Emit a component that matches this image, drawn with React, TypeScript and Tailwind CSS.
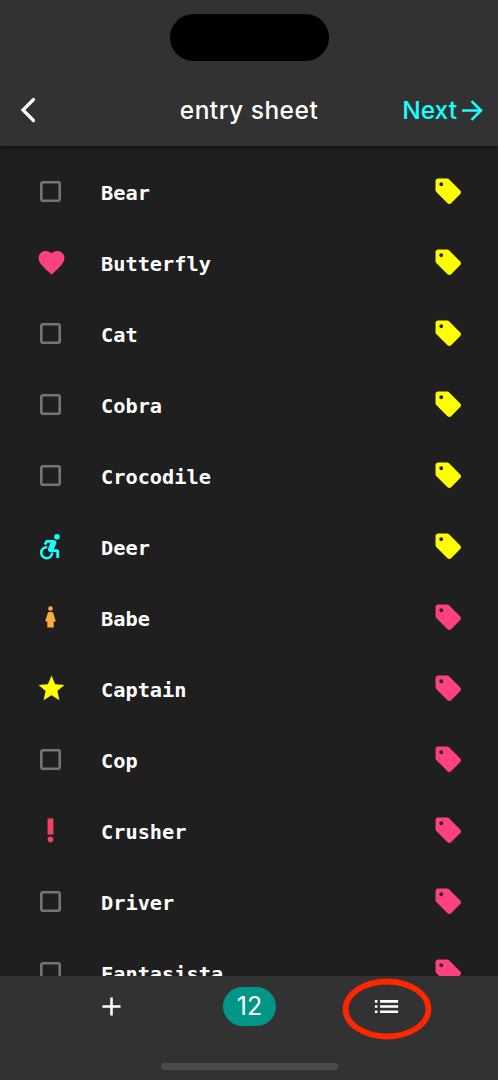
import { MdAdd, MdArrowForward, MdFavorite, MdList, MdSell, MdStar } from "react-icons/md";

type Mark = "none" | "heart" | "wheelchair" | "woman" | "star" | "alert";

type Entry = {
  name: string;
  mark: Mark;
  tag: "yellow" | "pink";
};

const entries: Entry[] = [
  { name: "Bear", mark: "none", tag: "yellow" },
  { name: "Butterfly", mark: "heart", tag: "yellow" },
  { name: "Cat", mark: "none", tag: "yellow" },
  { name: "Cobra", mark: "none", tag: "yellow" },
  { name: "Crocodile", mark: "none", tag: "yellow" },
  { name: "Deer", mark: "wheelchair", tag: "yellow" },
  { name: "Babe", mark: "woman", tag: "pink" },
  { name: "Captain", mark: "star", tag: "pink" },
  { name: "Cop", mark: "none", tag: "pink" },
  { name: "Crusher", mark: "alert", tag: "pink" },
  { name: "Driver", mark: "none", tag: "pink" },
  { name: "Fantasista", mark: "none", tag: "pink" },
];

function MarkIcon({ mark }: { mark: Mark }) {
  switch (mark) {
    case "heart":
      return <MdFavorite size={31} className="ml-px text-[#ff4081]" />;
    case "wheelchair":
      return (
        <svg width="25" height="28" viewBox="0 0 25 28" fill="none" className="mb-0.5 text-[#18ffff]">
          <circle cx="19" cy="4.7" r="2.8" fill="currentColor" />
          <path d="M6.9 12.6 L8.7 9.3 H14.5" stroke="currentColor" strokeWidth="2.7" />
          <path
            d="M12 8 H15.6 C18 8.2 19.1 9.8 18.2 11.8 L15.8 17.2 H18.6 C20.2 17.2 21.2 18 21.2 19.6 V26 H18.3 V20 H11.6 C10 19.2 9.6 18 10.1 16.6 L12.4 11 Z"
            fill="currentColor"
          />
          <path d="M9.3 15.2 A5.5 5.5 0 1 0 14.2 20.6" stroke="currentColor" strokeWidth="2.5" />
        </svg>
      );
    case "woman":
      return (
        <svg width="11" height="22" viewBox="0 0 11 22" fill="#ffab40" className="mb-px">
          <circle cx="5.5" cy="2.6" r="2.3" />
          <path d="M4.2 6 H6.8 Q7.8 6 8.2 7.1 L10.9 15.6 H8.7 V21.4 H2.3 V15.6 H0.1 L2.8 7.1 Q3.2 6 4.2 6 Z" />
        </svg>
      );
    case "star":
      return <MdStar size={31} className="ml-px text-[#ffff00]" />;
    case "alert":
      return (
        <svg width="7" height="26" viewBox="0 0 7 26" fill="#ef4264">
          <rect x="0.6" y="0.4" width="5.8" height="16.2" />
          <circle cx="3.5" cy="21.4" r="2.8" />
        </svg>
      );
    default:
      return (
        <svg width="21" height="21" viewBox="0 0 21 21" fill="none">
          <rect x="1.3" y="1.3" width="18.4" height="18.4" rx="1.6" stroke="#757575" strokeWidth="2.6" />
        </svg>
      );
  }
}

function EntryRow({ name, mark, tag }: Entry) {
  return (
    <li className="flex h-[71px] shrink-0 items-center pr-[35px] pl-[34px]">
      <span className="flex w-[33px] justify-center">
        <MarkIcon mark={mark} />
      </span>
      <span className="ml-[34px] flex-1 pt-[3px] font-['DejaVu_Sans_Mono',monospace] text-[20.3px] leading-6 font-bold text-white">
        {name}
      </span>
      <MdSell size={30.5} className={tag === "yellow" ? "text-[#ffff00]" : "text-[#ff4081]"} />
    </li>
  );
}

export default function App() {
  return (
    <div className="flex h-[1080px] w-[498px] flex-col overflow-hidden bg-[#1f1f1f] font-['Inter',sans-serif]">
      {/* App bar */}
      <header className="z-10 flex h-[146px] shrink-0 flex-col bg-[#323232] shadow-[0_2px_5px_rgba(0,0,0,0.35)]">
        <div className="mx-auto mt-3.5 h-[47px] w-[159px] rounded-full bg-black" />
        <div className="mt-[14px] grid h-[71px] grid-cols-3 items-center">
          <svg className="mb-px ml-5" width="17" height="26" viewBox="0 0 17 26" fill="none">
            <path d="M13.5 2.5 L3 13 L13.5 23.5" stroke="#fff" strokeWidth="3.2" strokeLinecap="round" />
          </svg>
          <h1 className="mb-px text-center text-[24.5px] leading-8 font-medium tracking-[0.5px] whitespace-nowrap text-white">
            entry sheet
          </h1>
          <button className="mb-px flex items-center justify-end pr-[10px] text-[24.5px] leading-8 font-medium text-[#18ffff]">
            Next
            <MdArrowForward size={31} />
          </button>
        </div>
      </header>

      {/* Entries */}
      <ul className="flex min-h-0 flex-1 flex-col overflow-hidden pt-[10px]">
        {entries.map((entry) => (
          <EntryRow key={entry.name} {...entry} />
        ))}
      </ul>

      {/* Bottom bar */}
      <footer className="flex h-[104px] shrink-0 flex-col bg-[#323232]">
        <div className="grid h-[61px] grid-cols-3 items-center justify-items-center px-[43px] text-white">
          <MdAdd size={31} />
          <span className="ml-px flex h-[39px] w-[53px] items-center justify-center rounded-full bg-[#009688] text-[25px]">
            12
          </span>
          <span className="relative">
            <MdList size={31} />
            <svg
              className="absolute -top-[13px] -left-[28.5px]"
              width="90"
              height="62"
              viewBox="0 0 90 62"
              fill="none"
            >
              <ellipse cx="45" cy="31" rx="41.5" ry="27.5" stroke="#ff2600" strokeWidth="5.8" />
            </svg>
          </span>
        </div>
        <div className="mx-auto mt-[26px] h-[7px] w-[177px] rounded-full bg-[#4b4b4b]" />
      </footer>
    </div>
  );
}
